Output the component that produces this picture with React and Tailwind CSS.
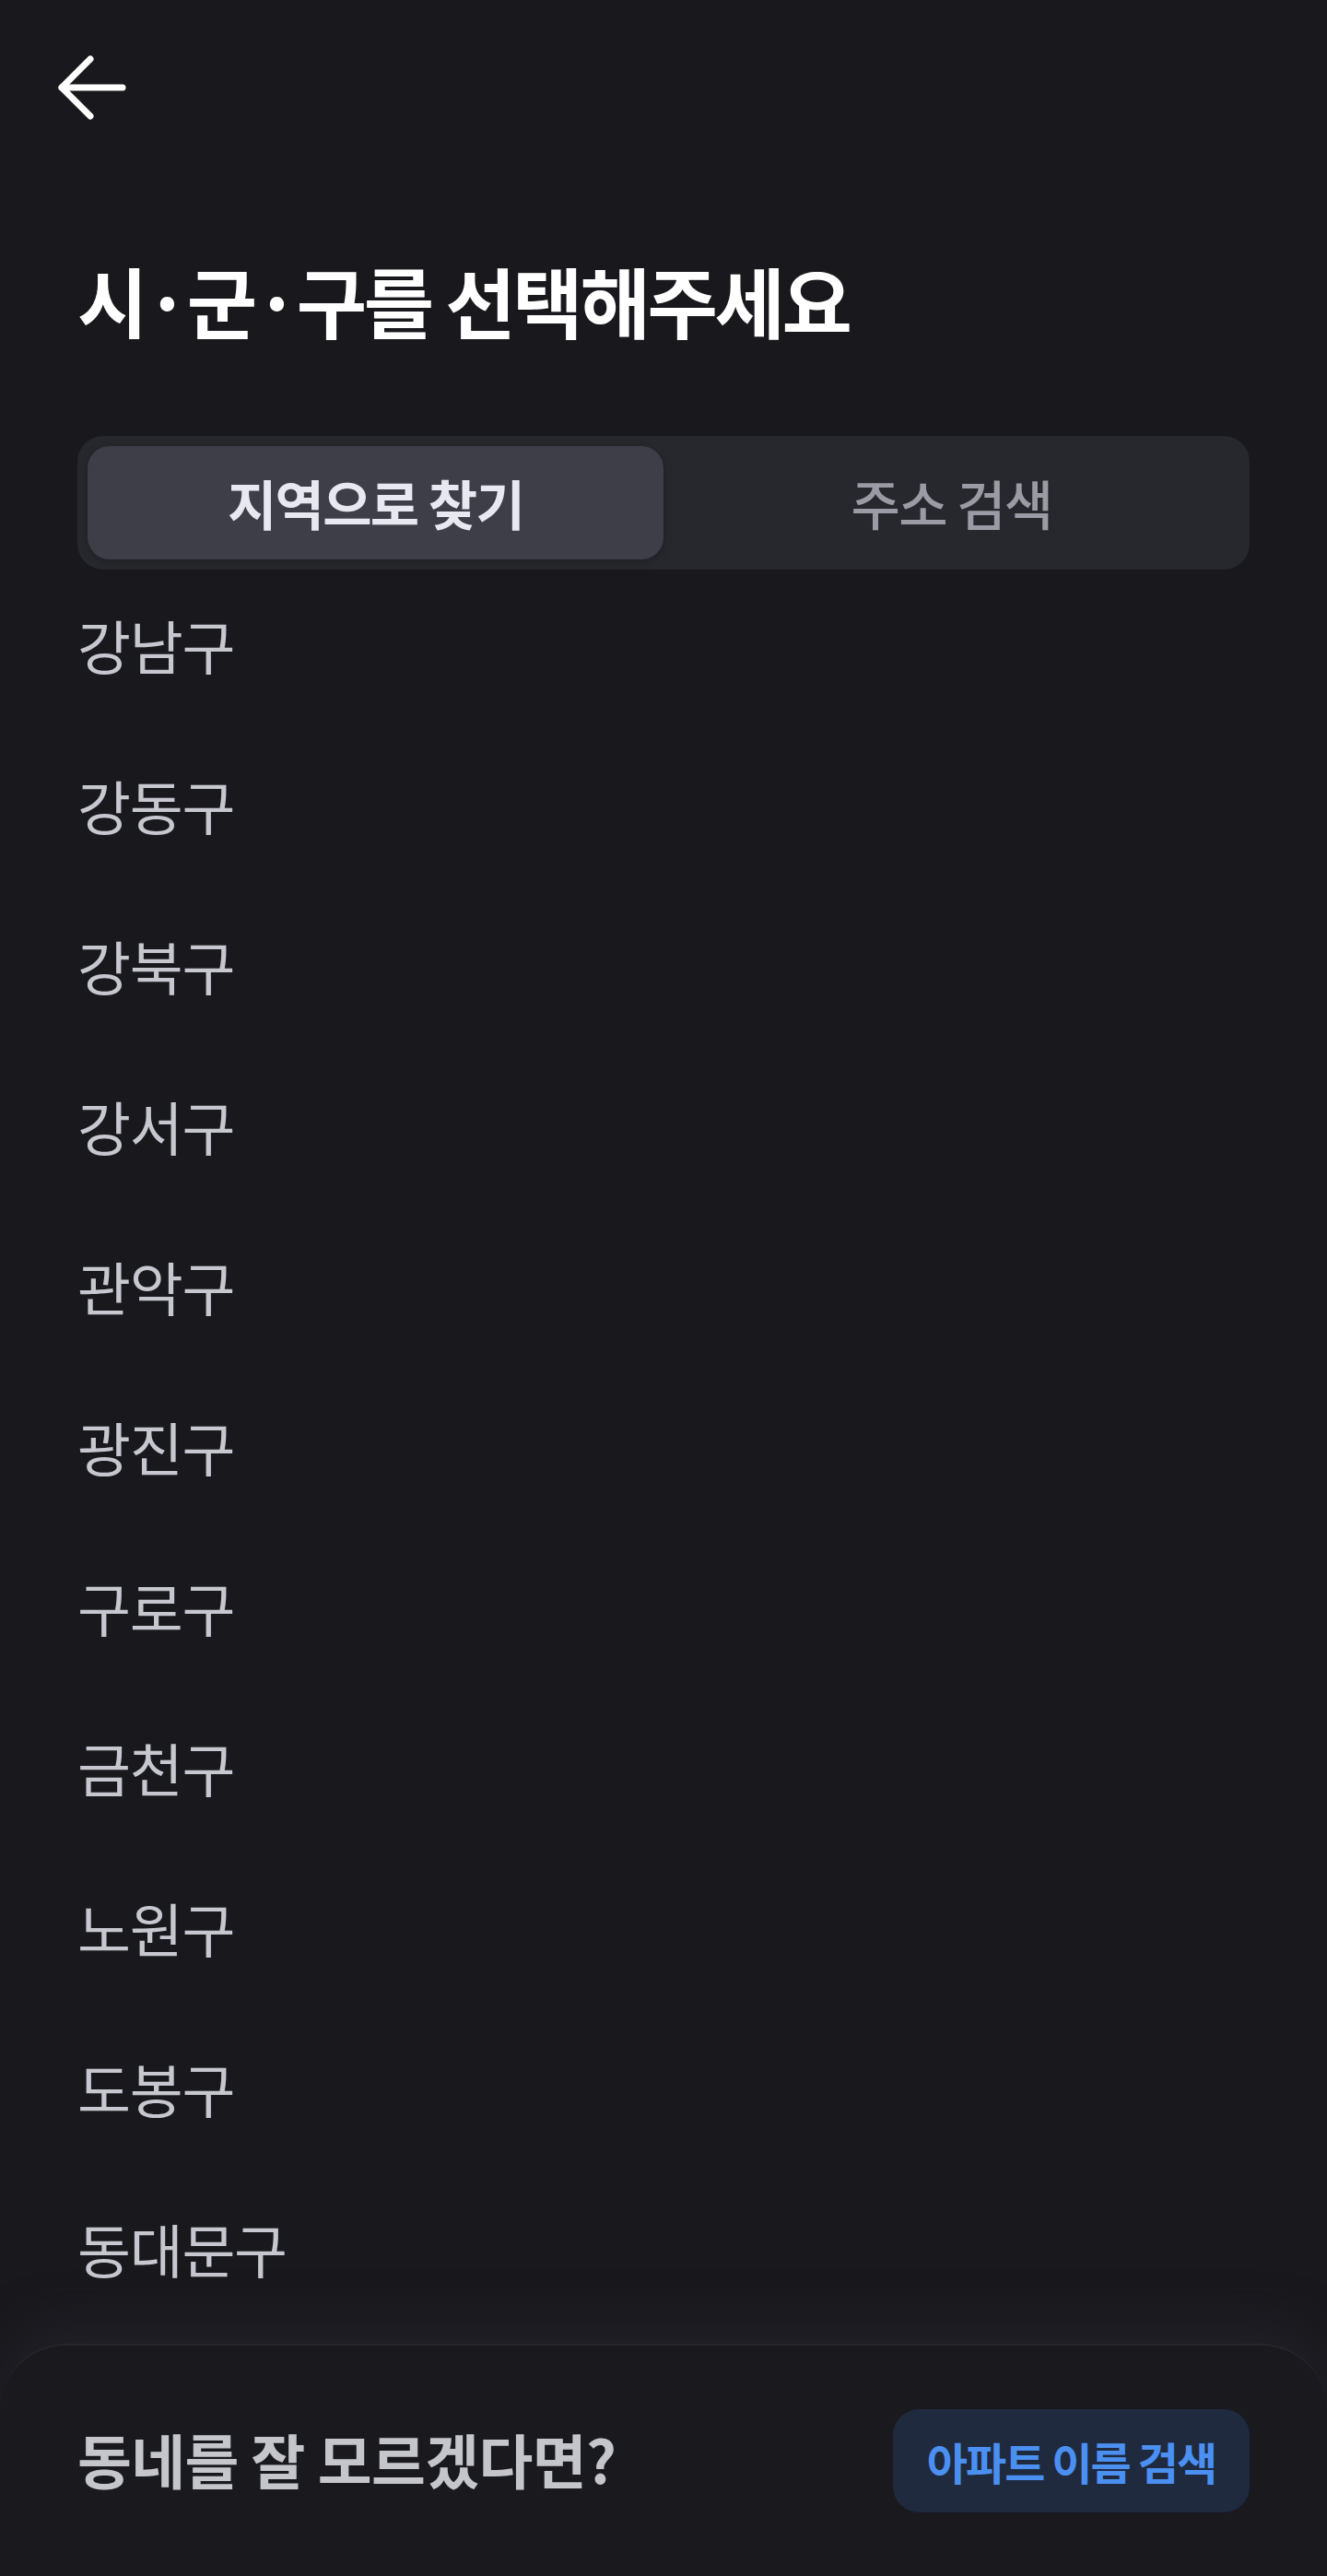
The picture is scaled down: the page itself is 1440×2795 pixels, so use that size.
import React from "react";

const items = ["강남구","강동구","강북구","강서구","관악구","광진구","구로구","금천구","노원구","도봉구","동대문구"];

export default function App() {
  return (
    <div className="h-[2795px] w-full bg-[#18181d] flex flex-col overflow-hidden" style={{fontFamily: '"Noto Sans CJK KR", "Noto Sans", sans-serif'}}>
      <div className="h-[190px] flex items-center pl-[62px]">
        <svg width="76" height="72" viewBox="0 0 76 72" fill="none" stroke="#ffffff" strokeWidth="7" strokeLinecap="round" strokeLinejoin="round">
          <path d="M5 36 H71" />
          <path d="M36 5 L5 36 L36 67" />
        </svg>
      </div>
      <div className="px-[84px] mt-[86px]">
        <h1 className="text-[83px] leading-[98px] font-bold text-white tracking-[-0.04em]">시·군·구를 선택해주세요</h1>
      </div>
      <div className="mx-[84px] mt-[99px] h-[145px] rounded-[28px] bg-[#27282d] p-[11px] flex">
        <div className="flex-1 rounded-[24px] bg-[#3d3e48] shadow-[0_2px_8px_rgba(0,0,0,0.25)] flex items-center justify-center text-[58px] font-semibold text-[#e8e8f0] tracking-[-0.03em]">지역으로 찾기</div>
        <div className="flex-1 flex items-center justify-center text-[58px] font-medium text-[#9a9ba4] tracking-[-0.03em]">주소 검색</div>
      </div>
      <div className="flex-1 flex flex-col -mt-[6px]">
        {items.map((t) => (
          <div key={t} className="h-[174px] shrink-0 flex items-center px-[84px] text-[63px] text-[#c6c7cf] tracking-[-0.02em]">{t}</div>
        ))}
      </div>
      <div className="h-[252px] shrink-0 rounded-t-[72px] bg-[#19191e] border-t-2 border-[#26272c] shadow-[0_-24px_48px_rgba(38,39,46,0.55)] flex items-center justify-between px-[84px]">
        <span className="text-[64px] font-semibold text-[#c5c6cc] tracking-[-0.01em] -mt-[6px]">동네를 잘 모르겠다면?</span>
        <button className="h-[112px] w-[387px] rounded-[28px] bg-[#1f2a3f] flex items-center justify-center text-[48px] font-semibold text-[#4b90f0] tracking-[-0.04em]">아파트 이름 검색</button>
      </div>
    </div>
  );
}
